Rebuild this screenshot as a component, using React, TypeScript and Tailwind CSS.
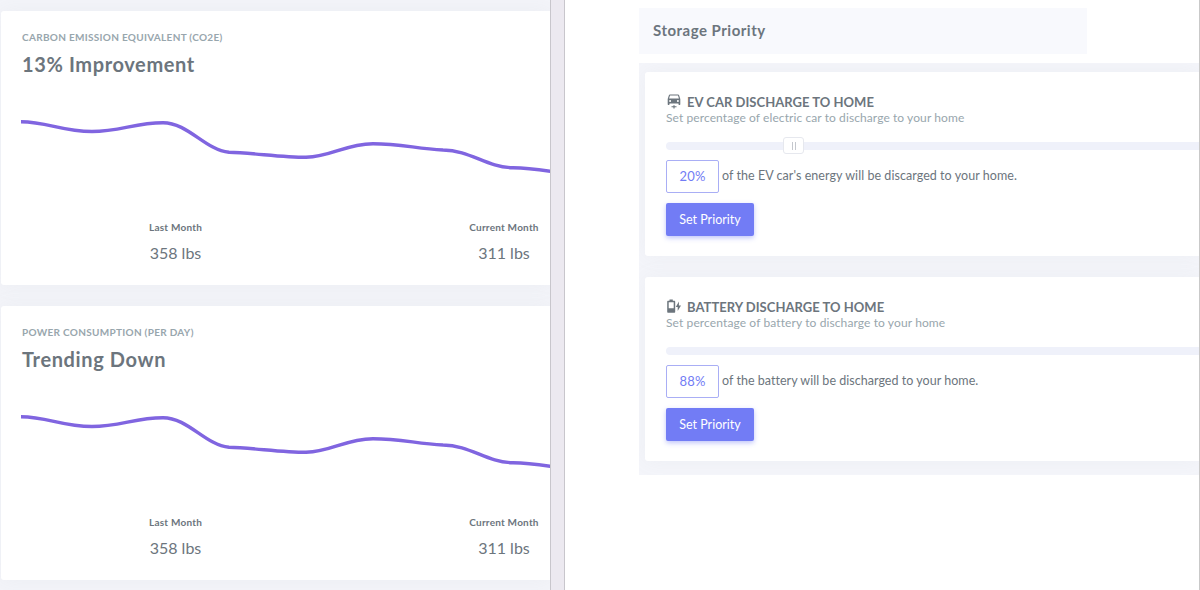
import type { ReactNode } from 'react';

function Stat({ label, value, className }: { label: string; value: string; className: string }) {
  return (
    <div className={`flex flex-col items-center whitespace-nowrap ${className}`}>
      <span className="text-[10px] leading-4 font-bold tracking-[0.22px]">{label}</span>
      <span className="mt-[8px] text-[16px] leading-5">{value}</span>
    </div>
  );
}

function TrendCard({ label, title }: { label: string; title: string }) {
  return (
    <section className="flex h-[274px] shrink-0 flex-col rounded-l-[3px] bg-white pt-[18px] shadow-[0_0_20px_rgba(154,161,171,0.08)]">
      <div className="pl-[21px] text-[10px] leading-4 font-bold tracking-[0.3px] text-[#98a6ad]">{label}</div>
      <h2 className="mt-[6px] pl-[21px] text-[20px] leading-[26px] font-bold tracking-[0.62px]">{title}</h2>
      <svg className="mt-[23px] block h-[90px] w-[549px]" viewBox="1 100 549 90" fill="none">
        <path
          d="M21 121.7C47 121.7 62 131.5 92 131.5C120 131.5 135 122.7 163 122.7C188 122.7 205 150 229 152.3C252 152.8 282 157.3 306 157.3C332 156.5 345 144 373 143.7C400 143.7 416 148.5 443 150C470 150 486 167 513 167.8C525 168 538 169.5 551 171.3"
          stroke="#8065e0"
          strokeWidth="3.4"
        />
      </svg>
      <div className="mt-[29px] flex pl-[141px]">
        <Stat label="Last Month" value="358 lbs" className="w-[67px]" />
        <Stat label="Current Month" value="311 lbs" className="ml-[253px] w-[84px]" />
      </div>
    </section>
  );
}

function CarIcon() {
  return (
    <svg className="h-[15px] w-[14px]" viewBox="0 0 14 15" fill="currentColor">
      <path
        fillRule="evenodd"
        d="M3 .5h8c.6 0 1 .3 1.2.9L13.3 5v5.3c0 .4-.2.6-.6.6h-.6c-.4 0-.6-.2-.6-.6V9.6h-9v.7c0 .4-.2.6-.6.6h-.6c-.4 0-.6-.2-.6-.6V5L1.800 1.400C2 .8 2.400.5 3 .5zM3 1.600L2.100 4.600h9.800L11 1.600zM3.100 6.100a1 1 0 1 0 0 2 1 1 0 0 0 0-2zM10.900 6.100a1 1 0 1 0 0 2 1 1 0 0 0 0-2z"
      />
      <path d="M4.500 12.200h1.900v-1h1.200v1h1.900v1H7.600v1.300H6.400v-1.300H4.500z" />
    </svg>
  );
}

function BatteryIcon() {
  return (
    <svg className="h-[15px] w-[14px]" viewBox="0 0 14 15" fill="currentColor">
      <path
        fillRule="evenodd"
        d="M2.500.5h3.300v1.300h1.400c.6 0 1 .4 1 1v9.900c0 .6-.4 1-1 1H1.200c-.6 0-1-.4-1-1V2.800c0-.6.4-1 1-1h1.300zM1.700 3.300v6h5v-6z"
      />
      <path d="M11.900 2.600v3.900h2.100L10.700 11.900V8H8.800z" />
    </svg>
  );
}

interface PriorityProps {
  icon: ReactNode;
  title: string;
  hint: string;
  hintClass: string;
  percent: string;
  note: string;
  noteClass: string;
  showHandle?: boolean;
}

function PriorityCard({ icon, title, hint, hintClass, percent, note, noteClass, showHandle }: PriorityProps) {
  return (
    <section className="flex h-[184px] flex-col rounded-l-[3px] bg-white pt-[21px] pl-[21px] shadow-[0_0_20px_rgba(154,161,171,0.08)]">
      <div className="flex h-[18px] items-center">
        <span className="-mt-[1px] flex w-[21px] pl-[1px]">{icon}</span>
        <h3 className="text-[13px] leading-[18px] font-bold tracking-[0.03px]">{title}</h3>
      </div>
      <p className={`text-[12px] leading-[14px] text-[#98a6ad] ${hintClass}`}>{hint}</p>
      <div className="relative mt-[17px] h-[8px] rounded-l-[4px] bg-[#eff1fa]">
        {showHandle && (
          <div className="absolute -top-[5px] left-[117px] flex h-[17px] w-[21px] items-center justify-center gap-[2px] rounded-[3px] border border-[#e6e8ee] bg-white">
            <span className="h-[8px] w-px bg-[#c4c7cd]" />
            <span className="h-[8px] w-px bg-[#c4c7cd]" />
          </div>
        )}
      </div>
      <div className="mt-[10px] flex items-center">
        <div className="flex h-[33px] w-[53px] items-center justify-center rounded-[2px] border border-[#a9aef5] text-[13px] tracking-[0.17px] text-[#727cf5]">
          {percent}
        </div>
        <span className={`-mt-[2px] ml-[3px] text-[12.5px] leading-4 ${noteClass}`}>{note}</span>
      </div>
      <button className="mt-[10px] h-[33px] w-[88px] rounded-[2px] bg-[#727cf5] pt-[1px] text-[12.5px] text-white shadow-[0_2px_5px_rgba(114,124,245,0.45)]">
        Set Priority
      </button>
    </section>
  );
}

export default function App() {
  return (
    <div className="flex h-[590px] w-[1200px] overflow-hidden bg-white font-['Lato','Liberation_Sans',sans-serif] text-[#6c757d]">
      <div className="flex w-[550px] shrink-0 flex-col gap-[21px] overflow-hidden bg-[#f3f4f9] pt-[11px] pl-px">
        <TrendCard label="CARBON EMISSION EQUIVALENT (CO2E)" title="13% Improvement" />
        <TrendCard label="POWER CONSUMPTION (PER DAY)" title="Trending Down" />
      </div>
      <div className="w-[15px] shrink-0 border-x border-[#c8c6cc] bg-[#ece9f0]" />
      <main className="flex grow flex-col overflow-hidden border-r border-[#c9c9c9] pt-[8px] pl-[74px]">
        <header className="flex h-[46px] w-[448px] items-center bg-[#f8f9fd] pb-[2px] pl-[14px]">
          <h1 className="text-[15px] leading-5 font-bold tracking-[0.5px]">Storage Priority</h1>
        </header>
        <div className="mt-[9px] flex h-[412px] flex-col gap-[21px] overflow-hidden bg-[#f4f5fa] pt-[9px] pl-[6px]">
          <PriorityCard
            icon={<CarIcon />}
            title="EV CAR DISCHARGE TO HOME"
            hint="Set percentage of electric car to discharge to your home"
            hintClass="tracking-[0.09px]"
            percent="20%"
            note="of the EV car's energy will be discarged to your home."
            noteClass="tracking-[0.055px]"
            showHandle
          />
          <PriorityCard
            icon={<BatteryIcon />}
            title="BATTERY DISCHARGE TO HOME"
            hint="Set percentage of battery to discharge to your home"
            hintClass="tracking-[0.11px]"
            percent="88%"
            note="of the battery will be discharged to your home."
            noteClass="tracking-[0.03px]"
          />
        </div>
      </main>
    </div>
  );
}
